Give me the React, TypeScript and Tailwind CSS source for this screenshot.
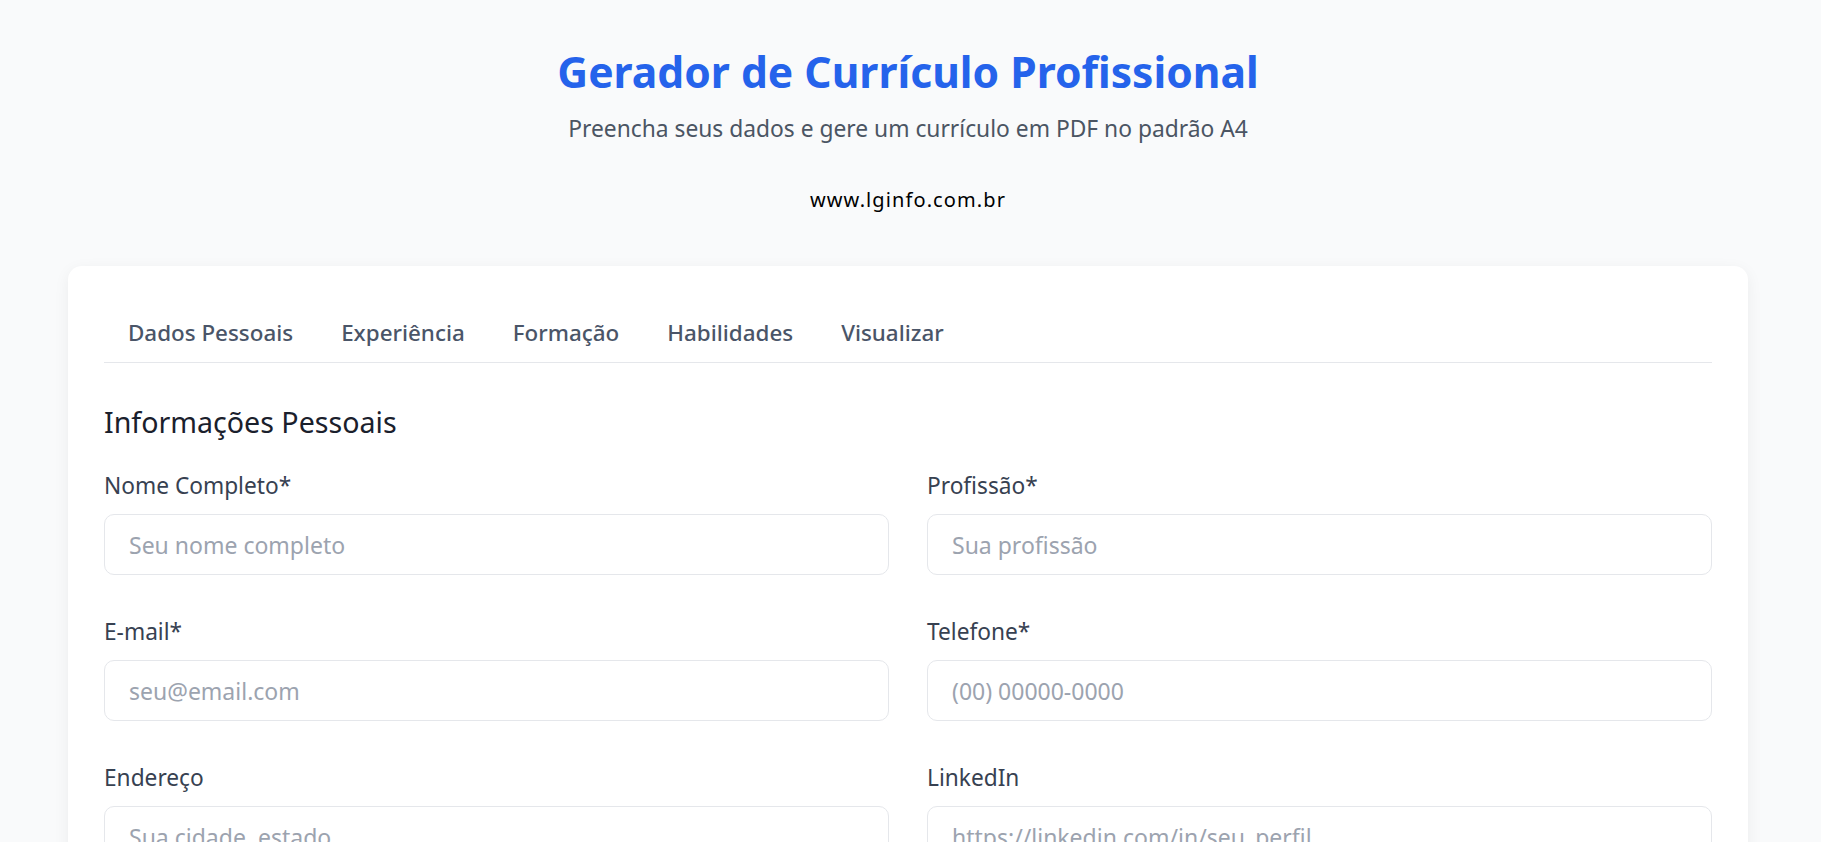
import React from "react";

const fields: { label: string; placeholder: string }[] = [
  { label: "Nome Completo*", placeholder: "Seu nome completo" },
  { label: "Profissão*", placeholder: "Sua profissão" },
  { label: "E-mail*", placeholder: "seu@email.com" },
  { label: "Telefone*", placeholder: "(00) 00000-0000" },
  { label: "Endereço", placeholder: "Sua cidade, estado" },
  { label: "LinkedIn", placeholder: "https://linkedin.com/in/seu_perfil" },
];

const tabs = ["Dados Pessoais", "Experiência", "Formação", "Habilidades", "Visualizar"];

export default function App() {
  return (
    <div
      className="min-h-screen bg-[#f9fafb] pl-[68px] pr-[73px] pb-10"
      style={{ fontFamily: '"Noto Sans", "Open Sans", sans-serif' }}
    >
      <header className="flex flex-col items-center pt-[45px]">
        <h1 className="text-[42.6px] leading-[52px] font-bold text-[#2563eb]">
          Gerador de Currículo Profissional
        </h1>
        <p className="mt-[16px] text-[22.8px] leading-[32px] text-[#4b5563]">
          Preencha seus dados e gere um currículo em PDF no padrão A4
        </p>
        <p className="mt-[41px] text-[20px] leading-[28px] tracking-[1.1px] text-black">www.lginfo.com.br</p>
      </header>

      <main className="mt-[52px] rounded-[14px] bg-white p-[36px] shadow-[0_4px_16px_rgba(0,0,0,0.06)]">
        <nav className="flex border-b border-[#e5e7eb]">
          {tabs.map((t) => (
            <button
              key={t}
              className="px-[24px] pt-[16px] pb-[14px] text-[22.4px] leading-[30px] font-medium text-[#4a5568]"
            >
              {t}
            </button>
          ))}
        </nav>

        <h2 className="mt-[41px] text-[28.6px] leading-[36px] font-normal text-[#1a202c]">
          Informações Pessoais
        </h2>

        <div className="mt-[30px] grid grid-cols-2 gap-x-[38px] gap-y-[41px]">
          {fields.map((f) => (
            <div key={f.label} className="flex flex-col">
              <label className="text-[22.7px] leading-[32px] text-[#374151]">{f.label}</label>
              <input
                placeholder={f.placeholder}
                className="mt-[12px] h-[61px] w-full rounded-[10px] border border-[#e5e7eb] bg-white px-[24px] text-[23px] text-[#111827] placeholder:text-[#9ca3af] outline-none"
              />
            </div>
          ))}
        </div>

        <div className="mt-[41px] flex flex-col">
          <label className="text-[22.7px] leading-[32px] text-[#374151]">Resumo Profissional</label>
          <textarea
            placeholder="Descreva brevemente sua experiência e objetivos profissionais"
            className="mt-[12px] h-[140px] w-full rounded-[10px] border border-[#e5e7eb] bg-white px-[24px] py-[14px] text-[23px] placeholder:text-[#9ca3af] outline-none resize-none"
          />
        </div>
      </main>
    </div>
  );
}
